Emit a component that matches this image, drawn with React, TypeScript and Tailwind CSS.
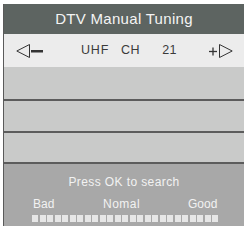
import React from "react";

const font = { fontFamily: '"Liberation Sans", Arial, sans-serif' };

export default function App() {
  const squares = Array.from({ length: 25 });
  return (
    <div className="w-[245px] h-[229px] bg-white pt-[4px] pl-[3px]" style={font}>
      <div className="w-[241px] border-l border-[#5a5a5a] flex flex-col">
        <div className="h-[30px] bg-[#5d6461] flex items-center justify-center text-[15px] text-[#f4f4f4] tracking-[0.3px]">
          DTV Manual Tuning
        </div>
        <div className="h-[33px] bg-[#ececec] flex items-center text-[12.5px] text-[#3a3a3a]">
          <svg className="ml-[12px]" width="28" height="14" viewBox="0 0 28 14">
            <polygon points="13.5,0.5 13.5,13.5 0.8,7" fill="none" stroke="#333" strokeWidth="1" />
            <rect x="15" y="6" width="12" height="2.5" fill="#333" />
          </svg>
          <span className="ml-[37px] tracking-[0.8px]">UHF</span>
          <span className="ml-[12px] tracking-[0.5px]">CH</span>
          <span className="ml-[22px] tracking-[0.5px]">21</span>
          <svg className="ml-auto mr-[11px]" width="24" height="14" viewBox="0 0 24 14">
            <line x1="0" y1="7.5" x2="8" y2="7.5" stroke="#333" strokeWidth="1.3" />
            <line x1="4" y1="3.5" x2="4" y2="11.5" stroke="#333" strokeWidth="1.3" />
            <polygon points="10.5,0.5 10.5,13.5 23.2,7" fill="none" stroke="#333" strokeWidth="1" />
          </svg>
        </div>
        <div className="h-[34px] bg-[#c9cac9] border-b-2 border-[#5c5c5c]" />
        <div className="h-[32px] bg-[#c9cac9] border-b-2 border-[#5c5c5c]" />
        <div className="h-[31px] bg-[#c9cac9] border-b-2 border-[#5c5c5c]" />
        <div className="h-[62px] bg-[#a8a8a8] flex flex-col text-[12px] text-[#f2f2f2]">
          <div className="pt-[12px] h-[24px] leading-[12px] text-center tracking-[0.4px]">Press OK to search</div>
          <div className="mt-[10px] h-[12px] leading-[12px] relative">
            <span className="absolute left-[29px]">Bad</span>
            <span className="absolute left-[99px] tracking-[0.5px]">Nomal</span>
            <span className="absolute left-[184px]">Good</span>
          </div>
          <div className="mt-[5px] ml-[28px] flex gap-[1.5px]">
            {squares.map((_, i) => (
              <div key={i} className="w-[6px] h-[7px] bg-[#e6e6e6]" />
            ))}
          </div>
        </div>
      </div>
    </div>
  );
}
